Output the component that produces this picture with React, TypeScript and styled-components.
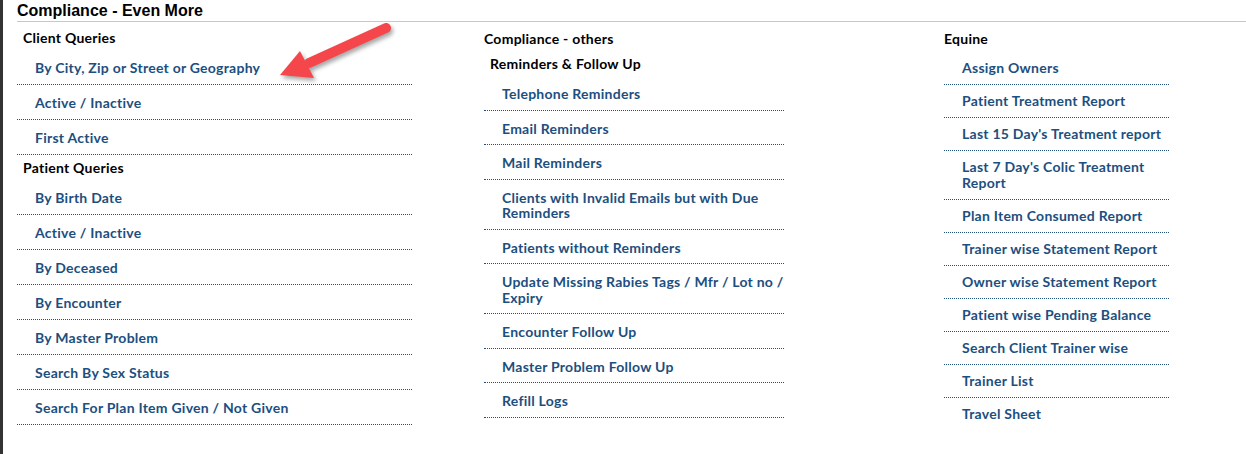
import React, { FC } from 'react';
import styled, { createGlobalStyle } from 'styled-components';

const GlobalStyle = createGlobalStyle`
    html, body {
        margin: 0;
        padding: 0;
        background: #ffffff;
    }
`;

type Entry = { heading: string; indent?: number; after?: number } | { link: string };

interface ColumnData {
    width: number;
    offset: number;
    padTop?: number;
    itemPad: string;
    lineHeight: number;
    lastOpen?: boolean;
    entries: Entry[];
}

const columns: ColumnData[] = [
    {
        width: 395,
        offset: 0,
        itemPad: '10px 0 8.5px 18px',
        lineHeight: 15.5,
        entries: [
            { heading: 'Client Queries', indent: 6 },
            { link: 'By City, Zip or Street or Geography' },
            { link: 'Active / Inactive' },
            { link: 'First Active' },
            { heading: 'Patient Queries', indent: 6 },
            { link: 'By Birth Date' },
            { link: 'Active / Inactive' },
            { link: 'By Deceased' },
            { link: 'By Encounter' },
            { link: 'By Master Problem' },
            { link: 'Search By Sex Status' },
            { link: 'Search For Plan Item Given / Not Given' },
        ],
    },
    {
        width: 300,
        offset: 72,
        padTop: 1,
        itemPad: '10px 0 8px 18px',
        lineHeight: 15.5,
        entries: [
            { heading: 'Compliance - others', indent: 0 },
            { heading: 'Reminders & Follow Up', indent: 6 },
            { link: 'Telephone Reminders' },
            { link: 'Email Reminders' },
            { link: 'Mail Reminders' },
            { link: 'Clients with Invalid Emails but with Due Reminders' },
            { link: 'Patients without Reminders' },
            { link: 'Update Missing Rabies Tags / Mfr / Lot no / Expiry' },
            { link: 'Encounter Follow Up' },
            { link: 'Master Problem Follow Up' },
            { link: 'Refill Logs' },
        ],
    },
    {
        width: 225,
        offset: 160,
        padTop: 1,
        itemPad: '8px 0 8px 18px',
        lineHeight: 16,
        lastOpen: true,
        entries: [
            { heading: 'Equine', indent: 0, after: 1 },
            { link: 'Assign Owners' },
            { link: 'Patient Treatment Report' },
            { link: "Last 15 Day's Treatment report" },
            { link: "Last 7 Day's Colic Treatment Report" },
            { link: 'Plan Item Consumed Report' },
            { link: 'Trainer wise Statement Report' },
            { link: 'Owner wise Statement Report' },
            { link: 'Patient wise Pending Balance' },
            { link: 'Search Client Trainer wise' },
            { link: 'Trainer List' },
            { link: 'Travel Sheet' },
        ],
    },
];

// red annotation arrow pointing at the first query
const Arrow: FC = () => (
    <ArrowWrap>
        <svg width="130" height="70" viewBox="0 0 130 70">
            <line x1="113" y1="8" x2="36" y2="43" stroke="#f5474b" strokeWidth="10" strokeLinecap="round" />
            <polygon points="7,55 27,31 41,58" fill="#f5474b" />
        </svg>
    </ArrowWrap>
);

const App: FC = () => (
    <>
        <GlobalStyle />
        <Page>
            <Title>Compliance - Even More</Title>
            <Columns>
                {columns.map((col, i) => (
                    <Column key={i} $width={col.width} $offset={col.offset} $padTop={col.padTop || 0}>
                        {col.entries.map((e, j) =>
                            'heading' in e ? (
                                <Heading key={j} $indent={e.indent || 0} $after={e.after || 0}>
                                    {e.heading}
                                </Heading>
                            ) : (
                                <Item
                                    key={j}
                                    $pad={col.itemPad}
                                    $lh={col.lineHeight}
                                    $open={!!col.lastOpen && j === col.entries.length - 1}
                                >
                                    <a href="#">{e.link}</a>
                                </Item>
                            )
                        )}
                    </Column>
                ))}
            </Columns>
            <Arrow />
        </Page>
    </>
);

export default App;

const Page = styled.div`
    position: relative;
    min-height: 100vh;
    box-sizing: border-box;
    border-left: 3px solid #333333;
    background: #ffffff;
`;

const Title = styled.div`
    margin-left: 14px;
    height: 21px;
    line-height: 21px;
    border-bottom: 1px solid #c8c8c8;
    font-family: 'Liberation Sans', Arial, sans-serif;
    font-weight: 700;
    font-size: 16px;
    color: #000000;
`;

const Columns = styled.div`
    display: flex;
    align-items: flex-start;
    margin-top: 3px;
    padding-left: 14px;
    font-family: Lato, 'Open Sans', sans-serif;
    font-weight: 700;
    font-size: 14px;
    letter-spacing: 0.25px;
`;

const Column = styled.div<{ $width: number; $offset: number; $padTop: number }>`
    width: ${({ $width }) => $width}px;
    margin-left: ${({ $offset }) => $offset}px;
    padding-top: ${({ $padTop }) => $padTop}px;
    flex-shrink: 0;
`;

const Heading = styled.div<{ $indent: number; $after: number }>`
    height: 25px;
    box-sizing: border-box;
    padding-top: 1px;
    line-height: 24px;
    padding-left: ${({ $indent }) => $indent}px;
    margin-bottom: ${({ $after }) => $after}px;
    color: #000000;
`;

const Item = styled.div<{ $pad: string; $lh: number; $open: boolean }>`
    padding: ${({ $pad }) => $pad};
    line-height: ${({ $lh }) => $lh}px;
    border-bottom: 1px dotted ${({ $open }) => ($open ? 'transparent' : '#1f4f7e')};

    & a {
        color: #1c4f80;
        text-decoration: none;
    }
`;

const ArrowWrap = styled.div`
    position: absolute;
    left: 270px;
    top: 20px;
    width: 130px;
    height: 70px;
    filter: drop-shadow(2px 3px 2px rgba(0, 0, 0, 0.35));
    pointer-events: none;
`;
